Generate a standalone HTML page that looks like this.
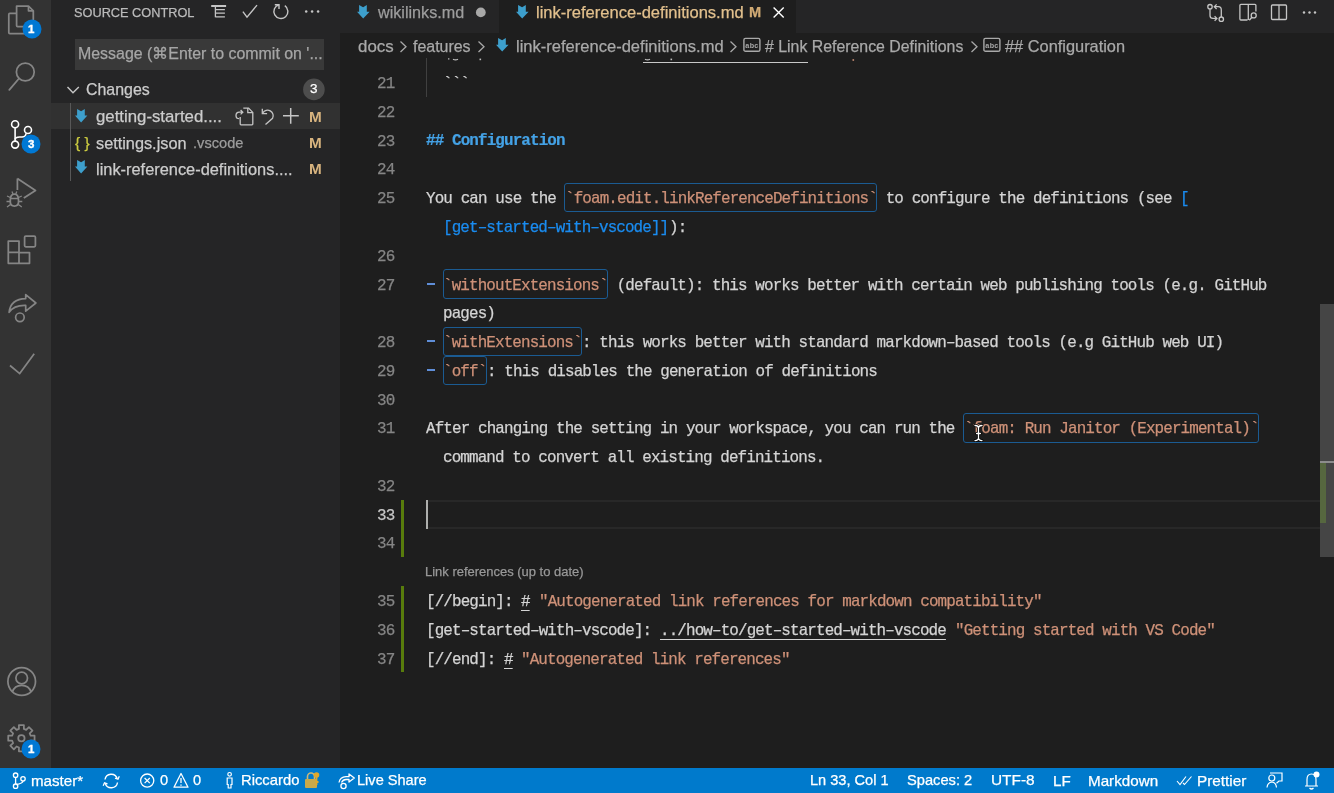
<!DOCTYPE html>
<html><head><meta charset="utf-8"><title>VS Code</title>
<style>
html,body{margin:0;padding:0;width:1334px;height:793px;overflow:hidden;background:#1e1e1e;}
.t{position:absolute;white-space:pre;will-change:transform;-webkit-text-stroke:0.25px currentColor;}
.r{position:absolute;}
</style></head><body>
<div class="r" style="left:0px;top:0px;width:51px;height:768px;background:#333333;"></div><div class="r" style="left:51px;top:0px;width:289px;height:768px;background:#252526;"></div><div class="r" style="left:340px;top:0px;width:994px;height:768px;background:#1e1e1e;"></div><div class="r" style="left:340px;top:0px;width:994px;height:33px;background:#252526;"></div><div class="r" style="left:340px;top:0px;width:159px;height:33px;background:#252526;"></div><div class="r" style="left:499px;top:0px;width:297px;height:33px;background:#1e1e1e;"></div><div class="r" style="left:0px;top:768px;width:1334px;height:25px;background:#007acc;"></div><svg class="r" style="left:0px;top:0px;" width="51" height="768" viewBox="0 0 51 768">
<g fill="none" stroke="#858585" stroke-width="1.75" stroke-linejoin="round">
<path d="M16.6 6 H28.5 L33.3 10.8 V25.5 a1 1 0 0 1 -1 1 H17.6 a1 1 0 0 1 -1 -1 Z"/>
<path d="M28.5 6 V10.8 H33.3"/>
<path d="M16.6 13.4 H9.8 a1 1 0 0 0 -1 1 V32.5 a1 1 0 0 0 1 1 H24.5 a1 1 0 0 0 1 -1 V26.5"/>
<circle cx="25.3" cy="72" r="8.9"/>
<path d="M19 78.5 L9.3 89.8" stroke-width="1.8" stroke-linecap="round"/>
<path d="M17.4 178.6 V190 M17.4 178.6 L35.5 190.4 L23.8 198"/>
<path d="M10.3 200 Q10.3 194 14.4 194 Q18.5 194 18.5 200 V202 Q18.5 206 14.4 206 Q10.3 206 10.3 202 Z"/>
<path d="M10.3 198.5 H18.5 M7 196 L10.3 197.5 M21.8 196 L18.5 197.5 M6.5 201.5 H10.3 M18.5 201.5 H22.3 M7 207 L10.5 204.5 M21.8 207 L18.3 204.5 M12 191.5 L13 194 M16.8 191.5 L15.8 194" stroke-width="1.3"/>
<path d="M8.3 252 V263.3 H29.5 V252.5 H19 V241 H8.3 Z M8.3 252.3 H19 V263.3"/>
<rect x="24.6" y="236" width="10.8" height="10.8" rx="1.2"/>
<path d="M9.1 312.3 Q10.5 299 25.7 298.6 V294.6 L35.9 303 L25.7 311.2 V305.4 Q14 305 9.1 312.3 Z" stroke-width="1.7"/>
<circle cx="19.9" cy="317.3" r="4.3" stroke-width="1.7"/>
<path d="M10 365.5 L19.7 373.6 L34.2 353.7" stroke-linejoin="miter"/>
<circle cx="21.7" cy="681.5" r="13.8"/>
<circle cx="21.7" cy="678" r="5.8"/>
<path d="M12.3 692 Q14.5 685.3 21.7 685.3 Q28.9 685.3 31.1 692"/>
<path d="M30.68 735.74 L34.56 735.69 L34.56 740.71 L30.68 740.66 L29.70 743.02 L32.48 745.73 L28.93 749.28 L26.22 746.50 L23.86 747.48 L23.91 751.36 L18.89 751.36 L18.94 747.48 L16.58 746.50 L13.87 749.28 L10.32 745.73 L13.10 743.02 L12.12 740.66 L8.24 740.71 L8.24 735.69 L12.12 735.74 L13.10 733.38 L10.32 730.67 L13.87 727.12 L16.58 729.90 L18.94 728.92 L18.89 725.04 L23.91 725.04 L23.86 728.92 L26.22 729.90 L28.93 727.12 L32.48 730.67 L29.70 733.38 Z"/>
<circle cx="21.4" cy="738.2" r="3.2"/>
</g>
<g fill="none" stroke="#ffffff" stroke-width="1.6">
<circle cx="15.1" cy="124.2" r="3.5"/>
<circle cx="28" cy="130" r="3.5"/>
<circle cx="15.1" cy="144.6" r="3.5"/>
<path d="M15.1 127.7 V141.1"/>
<path d="M15.1 139.5 Q15.5 137 19.5 137 H22 Q26 136.8 26 133.2"/>
</g>
</svg><svg class="r" style="left:19.6px;top:17.3px;" width="24" height="24" viewBox="0 0 24 24"><circle cx="12" cy="12" r="9.5" fill="#0078d4"/></svg><div class="t" style="left:28.30px;top:21.36px;font-size:11.5px;line-height:16.1px;color:#ffffff;font-weight:700;font-family:'Liberation Sans', sans-serif;-webkit-text-stroke:0.35px #fff;">1</div><svg class="r" style="left:19.4px;top:132.3px;" width="24" height="24" viewBox="0 0 24 24"><circle cx="12" cy="12" r="9.5" fill="#0078d4"/></svg><div class="t" style="left:28.10px;top:136.36px;font-size:11.5px;line-height:16.1px;color:#ffffff;font-weight:700;font-family:'Liberation Sans', sans-serif;-webkit-text-stroke:0.35px #fff;">3</div><svg class="r" style="left:19.4px;top:737px;" width="24" height="24" viewBox="0 0 24 24"><circle cx="12" cy="12" r="9.5" fill="#0078d4"/></svg><div class="t" style="left:28.10px;top:741.06px;font-size:11.5px;line-height:16.1px;color:#ffffff;font-weight:700;font-family:'Liberation Sans', sans-serif;-webkit-text-stroke:0.35px #fff;">1</div><div class="t" style="left:74.20px;top:3.85px;font-size:12.75px;line-height:17.85px;color:#bbbbbb;font-weight:400;font-family:'Liberation Sans', sans-serif;">SOURCE CONTROL</div><svg class="r" style="left:200px;top:0px;" width="130" height="26" viewBox="0 0 130 26">
<path d="M11.2 6 H26.1" stroke="#c5c5c5" stroke-width="2"/>
<path d="M15.4 6 V17.3 M15.4 9.6 H24.9 M15.4 13.2 H24.9 M15.4 16.8 H24.9" fill="none" stroke="#c5c5c5" stroke-width="1.3"/>
<path d="M42.9 11.7 L47 17.2 L57 5.1" fill="none" stroke="#c5c5c5" stroke-width="1.4"/>
<path d="M84.81 5.70 A7 7 0 1 1 78.97 4.77" fill="none" stroke="#c5c5c5" stroke-width="1.4"/>
<path d="M74.8 4.8 H79 V9" fill="none" stroke="#c5c5c5" stroke-width="1.4"/>
<circle cx="106.2" cy="11.5" r="1.25" fill="#c5c5c5"/><circle cx="112.1" cy="11.5" r="1.25" fill="#c5c5c5"/><circle cx="118.1" cy="11.5" r="1.25" fill="#c5c5c5"/>
</svg><div class="r" style="left:75px;top:39px;width:249px;height:31px;background:#393939;"></div><div class="t" style="left:78.10px;top:43.13px;font-size:15.93px;line-height:22.3px;color:#a6a6a6;font-weight:400;font-family:'Liberation Sans', sans-serif;">Message (⌘Enter to commit on '...</div><svg class="r" style="left:60px;top:80px;" width="30" height="20" viewBox="0 0 30 20"><path d="M7.5 7 L13 12.8 L18.8 7" fill="none" stroke="#c5c5c5" stroke-width="1.4"/></svg><div class="t" style="left:86.00px;top:79.03px;font-size:15.93px;line-height:22.3px;color:#cccccc;font-weight:400;font-family:'Liberation Sans', sans-serif;">Changes</div><svg class="r" style="left:300px;top:76px;" width="28" height="28" viewBox="0 0 28 28"><circle cx="13.9" cy="13.4" r="10.8" fill="#4d4d4d"/></svg><div class="t" style="left:309.60px;top:80.07px;font-size:13.5px;line-height:18.9px;color:#ffffff;font-weight:400;font-family:'Liberation Sans', sans-serif;">3</div><div class="r" style="left:51px;top:103px;width:289px;height:26px;background:#313131;"></div><div class="r" style="left:70px;top:103px;width:1px;height:78px;background:#585858;"></div><svg class="r" style="left:75.3px;top:108.6px;" width="14" height="15" viewBox="0 0 14 15"><path d="M2.1 0 L6.1 2.3 L9.8 0 V6.6 H12.4 L6.1 13.4 L0 6.6 H2.1 Z" fill="#3d9fcc"/></svg><div class="t" style="left:96.00px;top:105.32px;font-size:16.8px;line-height:23.52px;color:#cccccc;font-weight:400;font-family:'Liberation Sans', sans-serif;">getting-started....</div><svg class="r" style="left:230px;top:104px;" width="75" height="25" viewBox="0 0 75 25">
<path d="M13.3 4.1 H18.6 L22.8 8.4 V20 Q22.8 20.8 22 20.8 H11 Q10.2 20.8 10.2 20 V13" fill="none" stroke="#c5c5c5" stroke-width="1.3"/>
<path d="M17.8 4.1 V8.6 H22.8" fill="none" stroke="#c5c5c5" stroke-width="1.3"/>
<path d="M12.6 8.2 H9.2 A3.2 3.2 0 0 0 9.2 14.6 M10.6 6 L12.8 8.2 L10.6 10.4" fill="none" stroke="#c5c5c5" stroke-width="1.3"/>
<path d="M32.3 4.8 V9.7 H37.1" fill="none" stroke="#c5c5c5" stroke-width="1.3"/>
<path d="M32.8 8.9 A5.6 5.6 0 0 1 42.6 14.3 L35.5 20.6" fill="none" stroke="#c5c5c5" stroke-width="1.3"/>
<path d="M60.7 4 V19.8 M53 11.7 H68.8" fill="none" stroke="#c5c5c5" stroke-width="1.5"/>
</svg><div class="t" style="left:308.50px;top:105.99px;font-size:15.3px;line-height:21.42px;color:#d8b47f;font-weight:700;font-family:'Liberation Sans', sans-serif;-webkit-text-stroke:0;">M</div><div class="t" style="left:74.60px;top:131.98px;font-size:15.5px;line-height:21.7px;color:#cbcb41;font-weight:400;font-family:'Liberation Sans', sans-serif;">{ }</div><div class="t" style="left:96.40px;top:131.55px;font-size:16.29px;line-height:22.81px;color:#cccccc;font-weight:400;font-family:'Liberation Sans', sans-serif;">settings.json</div><div class="t" style="left:192.80px;top:133.27px;font-size:14.64px;line-height:20.5px;color:#9d9d9d;font-weight:400;font-family:'Liberation Sans', sans-serif;">.vscode</div><div class="t" style="left:308.50px;top:131.99px;font-size:15.3px;line-height:21.42px;color:#d8b47f;font-weight:700;font-family:'Liberation Sans', sans-serif;-webkit-text-stroke:0;">M</div><svg class="r" style="left:75.3px;top:160.4px;" width="14" height="15" viewBox="0 0 14 15"><path d="M2.1 0 L6.1 2.3 L9.8 0 V6.6 H12.4 L6.1 13.4 L0 6.6 H2.1 Z" fill="#3d9fcc"/></svg><div class="t" style="left:95.80px;top:157.54px;font-size:16.39px;line-height:22.95px;color:#cccccc;font-weight:400;font-family:'Liberation Sans', sans-serif;">link-reference-definitions....</div><div class="t" style="left:308.50px;top:157.79px;font-size:15.3px;line-height:21.42px;color:#d8b47f;font-weight:700;font-family:'Liberation Sans', sans-serif;-webkit-text-stroke:0;">M</div><svg class="r" style="left:357.3px;top:4.5px;" width="14" height="15" viewBox="0 0 14 15"><path d="M2.1 0 L6.1 2.3 L9.8 0 V6.8 H12.6 L6.2 13.6 L0 6.8 H2.1 Z" fill="#3d9fcc"/></svg><div class="t" style="left:377.90px;top:0.97px;font-size:16.17px;line-height:22.64px;color:#9d9d9d;font-weight:400;font-family:'Liberation Sans', sans-serif;">wikilinks.md</div><svg class="r" style="left:470px;top:0px;" width="20" height="33" viewBox="0 0 20 33"><circle cx="10.8" cy="12.4" r="4.9" fill="#a8a8a8"/></svg><svg class="r" style="left:516.3px;top:4.5px;" width="14" height="15" viewBox="0 0 14 15"><path d="M2.1 0 L6.1 2.3 L9.8 0 V6.8 H12.6 L6.2 13.6 L0 6.8 H2.1 Z" fill="#3d9fcc"/></svg><div class="t" style="left:536.00px;top:0.59px;font-size:16.54px;line-height:23.16px;color:#e2c08d;font-weight:400;font-family:'Liberation Sans', sans-serif;">link-reference-definitions.md</div><div class="t" style="left:749.00px;top:1.82px;font-size:14.6px;line-height:20.44px;color:#d0aa74;font-weight:700;font-family:'Liberation Sans', sans-serif;">M</div><svg class="r" style="left:765px;top:0px;" width="25" height="33" viewBox="0 0 25 33"><path d="M8.6 7.4 L18.7 17.5 M18.7 7.4 L8.6 17.5" stroke="#ffffff" stroke-width="1.4"/></svg><svg class="r" style="left:1200px;top:0px;" width="134" height="33" viewBox="0 0 134 33">
<circle cx="10" cy="6.7" r="2.2" fill="none" stroke="#c5c5c5" stroke-width="1.3"/>
<path d="M10 8.9 V15.5 Q10 18.4 13 18.4 H16.8 M14.6 16.1 L16.9 18.4 L14.6 20.7" fill="none" stroke="#c5c5c5" stroke-width="1.3"/>
<circle cx="21.3" cy="19.2" r="2.2" fill="none" stroke="#c5c5c5" stroke-width="1.3"/>
<path d="M21.3 17 V10 Q21.3 6.7 18.3 6.7 H14.3 M16.6 4.4 L14.3 6.7 L16.6 9" fill="none" stroke="#c5c5c5" stroke-width="1.3"/>
<path d="M55.9 11.5 V5.3 Q55.9 4.3 54.9 4.3 H40.9 Q39.9 4.3 39.9 5.3 V19 Q39.9 20 40.9 20 H47.5 M48.3 4.3 V20" fill="none" stroke="#c5c5c5" stroke-width="1.3"/>
<circle cx="53.7" cy="15.4" r="2.5" fill="none" stroke="#c5c5c5" stroke-width="1.3"/><path d="M51.9 17.3 L49.3 20.2" stroke="#c5c5c5" stroke-width="1.4"/>
<rect x="71.5" y="5" width="15" height="14.5" rx="1" fill="none" stroke="#c5c5c5" stroke-width="1.3"/>
<path d="M79 5 V19.5" stroke="#c5c5c5" stroke-width="1.3"/>
<circle cx="104" cy="12.5" r="1.2" fill="#c5c5c5"/><circle cx="109.5" cy="12.5" r="1.2" fill="#c5c5c5"/><circle cx="115" cy="12.5" r="1.2" fill="#c5c5c5"/>
</svg><div class="t" style="left:358.30px;top:34.52px;font-size:16.89px;line-height:23.65px;color:#a9a9a9;font-weight:400;font-family:'Liberation Sans', sans-serif;">docs</div><svg class="r" style="left:399px;top:36px;" width="10" height="20" viewBox="0 0 10 20"><path d="M1.5 5.5 L7 10.8 L1.5 16" fill="none" stroke="#a9a9a9" stroke-width="1.3"/></svg><div class="t" style="left:412.80px;top:35.51px;font-size:15.95px;line-height:22.33px;color:#a9a9a9;font-weight:400;font-family:'Liberation Sans', sans-serif;">features</div><svg class="r" style="left:476.5px;top:36px;" width="10" height="20" viewBox="0 0 10 20"><path d="M1.5 5.5 L7 10.8 L1.5 16" fill="none" stroke="#a9a9a9" stroke-width="1.3"/></svg><svg class="r" style="left:495.9px;top:38.4px;" width="14" height="15" viewBox="0 0 14 15"><path d="M2.1 0 L6.1 2.3 L9.8 0 V6.8 H12.6 L6.2 13.6 L0 6.8 H2.1 Z" fill="#3d9fcc"/></svg><div class="t" style="left:516.40px;top:34.89px;font-size:16.54px;line-height:23.16px;color:#a9a9a9;font-weight:400;font-family:'Liberation Sans', sans-serif;">link-reference-definitions.md</div><svg class="r" style="left:728.5px;top:36px;" width="10" height="20" viewBox="0 0 10 20"><path d="M1.5 5.5 L7 10.8 L1.5 16" fill="none" stroke="#a9a9a9" stroke-width="1.3"/></svg><svg class="r" style="left:742.5px;top:36px;will-change:transform;" width="20" height="20" viewBox="0 0 20 20"><rect x="0.9" y="2.4" width="16" height="12.9" rx="1.6" fill="none" stroke="#a9a9a9" stroke-width="1.4"/><text x="9" y="11.6" font-size="7.2" font-weight="700" font-family="Liberation Sans" fill="#a9a9a9" text-anchor="middle" letter-spacing="0.3">abc</text></svg><div class="t" style="left:764.50px;top:35.60px;font-size:15.86px;line-height:22.2px;color:#a9a9a9;font-weight:400;font-family:'Liberation Sans', sans-serif;"># Link Reference Definitions</div><svg class="r" style="left:969.5px;top:36px;" width="10" height="20" viewBox="0 0 10 20"><path d="M1.5 5.5 L7 10.8 L1.5 16" fill="none" stroke="#a9a9a9" stroke-width="1.3"/></svg><svg class="r" style="left:983px;top:36px;will-change:transform;" width="20" height="20" viewBox="0 0 20 20"><rect x="0.9" y="2.4" width="16" height="12.9" rx="1.6" fill="none" stroke="#a9a9a9" stroke-width="1.4"/><text x="9" y="11.6" font-size="7.2" font-weight="700" font-family="Liberation Sans" fill="#a9a9a9" text-anchor="middle" letter-spacing="0.3">abc</text></svg><div class="t" style="left:1005.00px;top:35.06px;font-size:16.38px;line-height:22.93px;color:#a9a9a9;font-weight:400;font-family:'Liberation Sans', sans-serif;">## Configuration</div><div class="r" style="left:340px;top:58px;width:994px;height:710px;overflow:hidden"><svg class="r" style="left:0px;top:0px" width="994" height="6" viewBox="0 0 994 6"><g fill="none" stroke="#bdbdbd" stroke-width="1.2"><path d="M113 1.2 Q115.5 2.6 118 1.2"/><path d="M305 1.2 Q307.5 2.6 310 1.2"/></g><g fill="#bdbdbd"><rect x="108" y="0.3" width="1.4" height="1.2"/><rect x="139.5" y="0.6" width="1.6" height="1.6"/><rect x="330.5" y="0.6" width="1.6" height="1.6"/></g><rect x="512.5" y="1.2" width="1.6" height="1.6" fill="#ce9178"/></svg><div class="r" style="left:303px;top:4px;width:165px;height:1px;background:#c8c8c8"></div><div class="r" style="left:86px;top:441.85px;width:894px;height:28.77px;border-top:2px solid #282828;border-bottom:2px solid #282828;box-sizing:border-box"></div><div class="r" style="left:86px;top:0px;width:1px;height:38.57px;background:#404040"></div><div class="t" style="left:37.16px;top:15.14px;font-size:15.9px;line-height:22.26px;color:#858585;font-weight:400;font-family:'Liberation Mono', monospace;letter-spacing:-0.8714px;">21</div><div class="t" style="left:37.16px;top:43.91px;font-size:15.9px;line-height:22.26px;color:#858585;font-weight:400;font-family:'Liberation Mono', monospace;letter-spacing:-0.8714px;">22</div><div class="t" style="left:37.16px;top:72.68px;font-size:15.9px;line-height:22.26px;color:#858585;font-weight:400;font-family:'Liberation Mono', monospace;letter-spacing:-0.8714px;">23</div><div class="t" style="left:37.16px;top:101.45px;font-size:15.9px;line-height:22.26px;color:#858585;font-weight:400;font-family:'Liberation Mono', monospace;letter-spacing:-0.8714px;">24</div><div class="t" style="left:37.16px;top:130.22px;font-size:15.9px;line-height:22.26px;color:#858585;font-weight:400;font-family:'Liberation Mono', monospace;letter-spacing:-0.8714px;">25</div><div class="t" style="left:37.16px;top:187.76px;font-size:15.9px;line-height:22.26px;color:#858585;font-weight:400;font-family:'Liberation Mono', monospace;letter-spacing:-0.8714px;">26</div><div class="t" style="left:37.16px;top:216.53px;font-size:15.9px;line-height:22.26px;color:#858585;font-weight:400;font-family:'Liberation Mono', monospace;letter-spacing:-0.8714px;">27</div><div class="t" style="left:37.16px;top:274.07px;font-size:15.9px;line-height:22.26px;color:#858585;font-weight:400;font-family:'Liberation Mono', monospace;letter-spacing:-0.8714px;">28</div><div class="t" style="left:37.16px;top:302.84px;font-size:15.9px;line-height:22.26px;color:#858585;font-weight:400;font-family:'Liberation Mono', monospace;letter-spacing:-0.8714px;">29</div><div class="t" style="left:37.16px;top:331.61px;font-size:15.9px;line-height:22.26px;color:#858585;font-weight:400;font-family:'Liberation Mono', monospace;letter-spacing:-0.8714px;">30</div><div class="t" style="left:37.16px;top:360.38px;font-size:15.9px;line-height:22.26px;color:#858585;font-weight:400;font-family:'Liberation Mono', monospace;letter-spacing:-0.8714px;">31</div><div class="t" style="left:37.16px;top:417.92px;font-size:15.9px;line-height:22.26px;color:#858585;font-weight:400;font-family:'Liberation Mono', monospace;letter-spacing:-0.8714px;">32</div><div class="t" style="left:37.16px;top:446.69px;font-size:15.9px;line-height:22.26px;color:#c6c6c6;font-weight:400;font-family:'Liberation Mono', monospace;letter-spacing:-0.8714px;">33</div><div class="t" style="left:37.16px;top:475.46px;font-size:15.9px;line-height:22.26px;color:#858585;font-weight:400;font-family:'Liberation Mono', monospace;letter-spacing:-0.8714px;">34</div><div class="t" style="left:37.16px;top:533.00px;font-size:15.9px;line-height:22.26px;color:#858585;font-weight:400;font-family:'Liberation Mono', monospace;letter-spacing:-0.8714px;">35</div><div class="t" style="left:37.16px;top:561.77px;font-size:15.9px;line-height:22.26px;color:#858585;font-weight:400;font-family:'Liberation Mono', monospace;letter-spacing:-0.8714px;">36</div><div class="t" style="left:37.16px;top:590.54px;font-size:15.9px;line-height:22.26px;color:#858585;font-weight:400;font-family:'Liberation Mono', monospace;letter-spacing:-0.8714px;">37</div><div class="t" style="left:103.34px;top:15.14px;font-size:15.9px;line-height:22.26px;color:#d4d4d4;font-weight:400;font-family:'Liberation Mono', monospace;letter-spacing:-0.8714px;">```</div><div class="t" style="left:86.00px;top:71.88px;font-size:15.9px;line-height:22.26px;color:#44a2e6;font-weight:700;font-family:'Liberation Mono', monospace;letter-spacing:-0.8714px;-webkit-text-stroke:0.2px currentColor;">## Configuration</div><div class="t" style="left:86.00px;top:130.22px;font-size:15.9px;line-height:22.26px;color:#d4d4d4;font-weight:400;font-family:'Liberation Mono', monospace;letter-spacing:-0.8714px;">You can use the </div><div class="r" style="left:224.32px;top:125.18px;width:312.72px;height:29.27px;border:1.25px solid #1b5b92;border-radius:3px;box-sizing:border-box"></div><div class="t" style="left:224.72px;top:130.22px;font-size:15.9px;line-height:22.26px;color:#ce9178;font-weight:400;font-family:'Liberation Mono', monospace;letter-spacing:-0.8714px;">`foam.edit.linkReferenceDefinitions`</div><div class="t" style="left:536.84px;top:130.22px;font-size:15.9px;line-height:22.26px;color:#d4d4d4;font-weight:400;font-family:'Liberation Mono', monospace;letter-spacing:-0.8714px;"> to configure the definitions (see </div><div class="t" style="left:840.29px;top:130.22px;font-size:15.9px;line-height:22.26px;color:#1a8cf0;font-weight:400;font-family:'Liberation Mono', monospace;letter-spacing:-0.8714px;">[</div><div class="t" style="left:103.34px;top:158.99px;font-size:15.9px;line-height:22.26px;color:#1a8cf0;font-weight:400;font-family:'Liberation Mono', monospace;letter-spacing:-0.8714px;">[get–started–with–vscode]]</div><div class="t" style="left:328.76px;top:158.99px;font-size:15.9px;line-height:22.26px;color:#d4d4d4;font-weight:400;font-family:'Liberation Mono', monospace;letter-spacing:-0.8714px;">):</div><div class="r" style="left:86.60px;top:225.00px;width:8.4px;height:2px;background:#5f8ed8"></div><div class="r" style="left:102.94px;top:211.49px;width:165.33px;height:29.27px;border:1.25px solid #1b5b92;border-radius:3px;box-sizing:border-box"></div><div class="t" style="left:103.34px;top:216.53px;font-size:15.9px;line-height:22.26px;color:#ce9178;font-weight:400;font-family:'Liberation Mono', monospace;letter-spacing:-0.8714px;">`withoutExtensions`</div><div class="t" style="left:268.07px;top:216.53px;font-size:15.9px;line-height:22.26px;color:#d4d4d4;font-weight:400;font-family:'Liberation Mono', monospace;letter-spacing:-0.8714px;"> (default): this works better with certain web publishing tools (e.g. GitHub</div><div class="t" style="left:103.34px;top:245.30px;font-size:15.9px;line-height:22.26px;color:#d4d4d4;font-weight:400;font-family:'Liberation Mono', monospace;letter-spacing:-0.8714px;">pages)</div><div class="r" style="left:86.60px;top:282.00px;width:8.4px;height:2px;background:#5f8ed8"></div><div class="r" style="left:102.94px;top:269.03px;width:139.32px;height:29.27px;border:1.25px solid #1b5b92;border-radius:3px;box-sizing:border-box"></div><div class="t" style="left:103.34px;top:274.07px;font-size:15.9px;line-height:22.26px;color:#ce9178;font-weight:400;font-family:'Liberation Mono', monospace;letter-spacing:-0.8714px;">`withExtensions`</div><div class="t" style="left:242.06px;top:274.07px;font-size:15.9px;line-height:22.26px;color:#d4d4d4;font-weight:400;font-family:'Liberation Mono', monospace;letter-spacing:-0.8714px;">: this works better with standard markdown–based tools (e.g GitHub web UI)</div><div class="r" style="left:86.60px;top:311.00px;width:8.4px;height:2px;background:#5f8ed8"></div><div class="r" style="left:102.94px;top:297.80px;width:43.95px;height:29.27px;border:1.25px solid #1b5b92;border-radius:3px;box-sizing:border-box"></div><div class="t" style="left:103.34px;top:302.84px;font-size:15.9px;line-height:22.26px;color:#ce9178;font-weight:400;font-family:'Liberation Mono', monospace;letter-spacing:-0.8714px;">`off`</div><div class="t" style="left:146.69px;top:302.84px;font-size:15.9px;line-height:22.26px;color:#d4d4d4;font-weight:400;font-family:'Liberation Mono', monospace;letter-spacing:-0.8714px;">: this disables the generation of definitions</div><div class="t" style="left:86.00px;top:360.38px;font-size:15.9px;line-height:22.26px;color:#d4d4d4;font-weight:400;font-family:'Liberation Mono', monospace;letter-spacing:-0.8714px;">After changing the setting in your workspace, you can run the </div><div class="r" style="left:623.14px;top:355.34px;width:295.38px;height:29.27px;border:1.25px solid #1b5b92;border-radius:3px;box-sizing:border-box"></div><div class="t" style="left:623.54px;top:360.38px;font-size:15.9px;line-height:22.26px;color:#ce9178;font-weight:400;font-family:'Liberation Mono', monospace;letter-spacing:-0.8714px;">`foam: Run Janitor (Experimental)`</div><div class="t" style="left:103.34px;top:389.15px;font-size:15.9px;line-height:22.26px;color:#d4d4d4;font-weight:400;font-family:'Liberation Mono', monospace;letter-spacing:-0.8714px;">command to convert all existing definitions.</div><div class="r" style="left:86px;top:441.85px;width:2px;height:28.77px;background:#aeafad"></div><div class="t" style="left:85.00px;top:505.10px;font-size:12.98px;line-height:18.17px;color:#999999;font-weight:400;font-family:'Liberation Sans', sans-serif;">Link references (up to date)</div><div class="t" style="left:86.00px;top:533.00px;font-size:15.9px;line-height:22.26px;color:#d4d4d4;font-weight:400;font-family:'Liberation Mono', monospace;letter-spacing:-0.8714px;">[//begin]: </div><div class="t" style="left:181.37px;top:533.00px;font-size:15.9px;line-height:22.26px;color:#d4d4d4;font-weight:400;font-family:'Liberation Mono', monospace;letter-spacing:-0.8714px;text-decoration:underline;text-underline-offset:4px;">#</div><div class="t" style="left:198.71px;top:533.00px;font-size:15.9px;line-height:22.26px;color:#ce9178;font-weight:400;font-family:'Liberation Mono', monospace;letter-spacing:-0.8714px;">&quot;Autogenerated link references for markdown compatibility&quot;</div><div class="t" style="left:86.00px;top:561.77px;font-size:15.9px;line-height:22.26px;color:#d4d4d4;font-weight:400;font-family:'Liberation Mono', monospace;letter-spacing:-0.8714px;">[get–started–with–vscode]: </div><div class="t" style="left:320.09px;top:561.77px;font-size:15.9px;line-height:22.26px;color:#d4d4d4;font-weight:400;font-family:'Liberation Mono', monospace;letter-spacing:-0.8714px;text-decoration:underline;text-underline-offset:4px;">../how–to/get–started–with–vscode</div><div class="t" style="left:614.87px;top:561.77px;font-size:15.9px;line-height:22.26px;color:#ce9178;font-weight:400;font-family:'Liberation Mono', monospace;letter-spacing:-0.8714px;">&quot;Getting started with VS Code&quot;</div><div class="t" style="left:86.00px;top:590.54px;font-size:15.9px;line-height:22.26px;color:#d4d4d4;font-weight:400;font-family:'Liberation Mono', monospace;letter-spacing:-0.8714px;">[//end]: </div><div class="t" style="left:164.03px;top:590.54px;font-size:15.9px;line-height:22.26px;color:#d4d4d4;font-weight:400;font-family:'Liberation Mono', monospace;letter-spacing:-0.8714px;text-decoration:underline;text-underline-offset:4px;">#</div><div class="t" style="left:181.37px;top:590.54px;font-size:15.9px;line-height:22.26px;color:#ce9178;font-weight:400;font-family:'Liberation Mono', monospace;letter-spacing:-0.8714px;">&quot;Autogenerated link references&quot;</div><div class="r" style="left:61px;top:441.85px;width:3px;height:57.54px;background:#587c0c"></div><div class="r" style="left:61px;top:528.16px;width:3px;height:86.31px;background:#587c0c"></div><div class="r" style="left:980px;top:246px;width:14px;height:253px;background:#454545"></div><div class="r" style="left:980px;top:403px;width:6px;height:62px;background:#56673f"></div><div class="r" style="left:980px;top:403px;width:14px;height:2px;background:#8c8c8c"></div><svg class="r" style="left:0;top:0" width="994" height="710" viewBox="0 0 994 710"><path d="M635 367.5 Q638.5 367.5 638.5 370.3 Q638.5 367.5 642 367.5 M638.5 370 V380 M636.6 375.5 H640.4 M635 382.6 Q638.5 382.6 638.5 379.8 Q638.5 382.6 642 382.6" fill="none" stroke="#000" stroke-width="2.8" stroke-linecap="round"/><path d="M635 367.5 Q638.5 367.5 638.5 370.3 Q638.5 367.5 642 367.5 M638.5 370 V380 M636.6 375.5 H640.4 M635 382.6 Q638.5 382.6 638.5 379.8 Q638.5 382.6 642 382.6" fill="none" stroke="#fff" stroke-width="1.3" stroke-linecap="round"/></svg></div><svg class="r" style="left:0px;top:768px;" width="1334" height="25" viewBox="0 0 1334 25">
<circle cx="15.6" cy="7.2" r="2.2" fill="none" stroke="#ffffff" stroke-width="1.3"/>
<circle cx="15.6" cy="18.2" r="2.2" fill="none" stroke="#ffffff" stroke-width="1.3"/>
<circle cx="23" cy="10.8" r="2.2" fill="none" stroke="#ffffff" stroke-width="1.3"/>
<path d="M15.6 9.4 V16 M23 13 Q22.8 15.5 15.8 16.5" fill="none" stroke="#ffffff" stroke-width="1.3"/>
<path d="M105 11.5 A6.3 6.3 0 0 1 117.2 10.5 M117.5 14.5 A6.3 6.3 0 0 1 105.3 15.5" fill="none" stroke="#ffffff" stroke-width="1.4"/>
<path d="M115 10.2 L118 11.2 L119.3 8.3 M107.5 15.8 L104.5 14.8 L103.2 17.7" fill="none" stroke="#ffffff" stroke-width="1.3"/>
<circle cx="147.2" cy="12.6" r="6.6" fill="none" stroke="#ffffff" stroke-width="1.3"/>
<path d="M144.6 10 L149.8 15.2 M149.8 10 L144.6 15.2" stroke="#ffffff" stroke-width="1.2"/>
<path d="M181 5.5 L188 19.2 H174 Z" fill="none" stroke="#ffffff" stroke-width="1.3" stroke-linejoin="round"/>
<path d="M181 10 V15 M181 16.5 V17.8" stroke="#ffffff" stroke-width="1.3"/>
<circle cx="229.6" cy="6.3" r="1.8" fill="none" stroke="#ffffff" stroke-width="1.2"/>
<path d="M227.2 10 H232 V16.5 H231 V20 H228.2 V16.5 H227.2 Z" fill="none" stroke="#ffffff" stroke-width="1.2"/>
<path d="M339 14.5 Q340 9 346 8.7 H349 V6 L354.3 10 L349 14 V11.5 H346 Q343 11.5 341.5 14.5" fill="none" stroke="#ffffff" stroke-width="1.3" stroke-linejoin="round"/>
<circle cx="343.5" cy="18" r="2.6" fill="none" stroke="#ffffff" stroke-width="1.3"/>
<path d="M1177 13 L1180 16.5 L1186 8.5 M1183 15 L1184.5 16.5 L1191.5 8.5" fill="none" stroke="#ffffff" stroke-width="1.1"/>
<path d="M1267 19.5 Q1267.5 14.5 1272 14 Q1276 14.5 1276.5 19.5" fill="none" stroke="#ffffff" stroke-width="1.2"/>
<circle cx="1271.8" cy="10" r="3" fill="none" stroke="#ffffff" stroke-width="1.2"/>
<path d="M1270 5 H1282 V13 H1279 L1276.5 15.3" fill="none" stroke="#ffffff" stroke-width="1.2"/>
<path d="M1305 18 H1318 M1307 18 V11.5 Q1307 6 1311.5 6 Q1316 6 1316 11.5 V18 M1309.5 20 Q1311.5 22 1313.5 20" fill="none" stroke="#ffffff" stroke-width="1.2"/>
<circle cx="1316.5" cy="6.5" r="3" fill="#ffffff"/>
</svg><div class="t" style="left:31.10px;top:769.75px;font-size:15.14px;line-height:21.2px;color:#ffffff;font-weight:400;font-family:'Liberation Sans', sans-serif;">master*</div><div class="t" style="left:159.90px;top:770.32px;font-size:14.6px;line-height:20.44px;color:#ffffff;font-weight:400;font-family:'Liberation Sans', sans-serif;">0</div><div class="t" style="left:193.40px;top:770.32px;font-size:14.6px;line-height:20.44px;color:#ffffff;font-weight:400;font-family:'Liberation Sans', sans-serif;">0</div><div class="t" style="left:241.30px;top:770.10px;font-size:14.81px;line-height:20.73px;color:#ffffff;font-weight:400;font-family:'Liberation Sans', sans-serif;">Riccardo</div><svg class="r" style="left:302px;top:770px;" width="20" height="20" viewBox="0 0 20 20">
<path d="M5.5 9 V6.5 A3.5 3.5 0 0 1 12.5 6.5 V9" fill="none" stroke="#c9b77a" stroke-width="1.6"/>
<rect x="3" y="9" width="12" height="9" rx="1" fill="#c9a94a"/>
<circle cx="14.5" cy="5" r="2.8" fill="#e0a82b"/><path d="M14.5 7 V15 M14.5 12 H16.5" stroke="#e0a82b" stroke-width="1.8"/>
</svg><div class="t" style="left:357.30px;top:770.34px;font-size:14.58px;line-height:20.41px;color:#ffffff;font-weight:400;font-family:'Liberation Sans', sans-serif;">Live Share</div><div class="t" style="left:810.00px;top:770.34px;font-size:14.58px;line-height:20.41px;color:#ffffff;font-weight:400;font-family:'Liberation Sans', sans-serif;">Ln 33, Col 1</div><div class="t" style="left:907.40px;top:770.24px;font-size:14.68px;line-height:20.55px;color:#ffffff;font-weight:400;font-family:'Liberation Sans', sans-serif;">Spaces: 2</div><div class="t" style="left:990.90px;top:769.48px;font-size:15.4px;line-height:21.56px;color:#ffffff;font-weight:400;font-family:'Liberation Sans', sans-serif;">UTF-8</div><div class="t" style="left:1052.80px;top:769.74px;font-size:15.15px;line-height:21.21px;color:#ffffff;font-weight:400;font-family:'Liberation Sans', sans-serif;">LF</div><div class="t" style="left:1088.20px;top:769.68px;font-size:15.21px;line-height:21.29px;color:#ffffff;font-weight:400;font-family:'Liberation Sans', sans-serif;">Markdown</div><div class="t" style="left:1196.80px;top:769.56px;font-size:15.33px;line-height:21.46px;color:#ffffff;font-weight:400;font-family:'Liberation Sans', sans-serif;">Prettier</div>
</body></html>
